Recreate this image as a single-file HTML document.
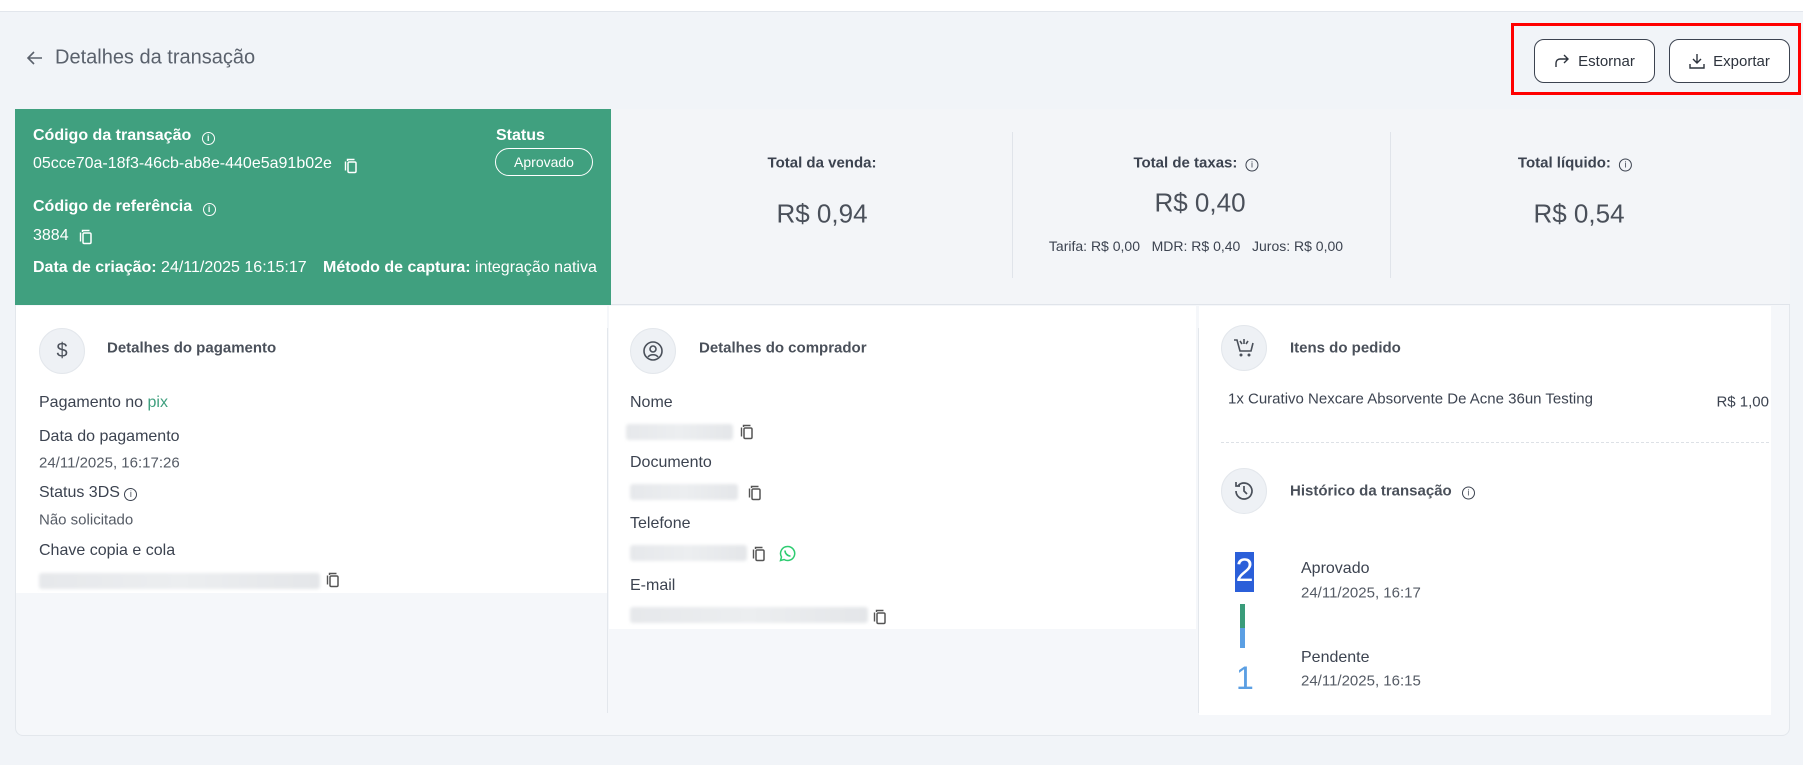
<!DOCTYPE html>
<html><head><meta charset="utf-8"><style>
*{margin:0;padding:0;box-sizing:border-box}
body{width:1803px;height:765px;background:#f1f4f8;font-family:"Liberation Sans",sans-serif;color:#3c4350;position:relative;overflow:hidden}
.a{position:absolute;white-space:nowrap}
.t{transform:translateY(-50%)}
.c{transform:translate(-50%,-50%)}
.w{color:#fff}
.b{font-weight:bold}
.blur{position:absolute;background:linear-gradient(90deg,#e6e8eb,#eceef0,#e4e6e9);filter:blur(1.5px);height:16px;border-radius:3px}
.ic{position:absolute;width:46px;height:46px;border-radius:50%;background:#eef1f5;border:1px solid #e3e7ec;display:flex;align-items:center;justify-content:center}
.btn{position:absolute;height:44px;border:1.5px solid #3c4350;border-radius:10px;background:#fff;display:flex;align-items:center;justify-content:center;gap:8px;font-size:15px;color:#2d333d}
.cp{position:absolute}
</style></head><body>
<svg width="0" height="0" style="position:absolute"><defs><symbol id="cp" viewBox="0 0 14 16"><path d="M3.5 3V1.5h7M1.5 3.5v9" stroke="currentColor" stroke-width="1.4" fill="none"/><rect x="4" y="4" width="8" height="10.5" rx="1.3" stroke="currentColor" stroke-width="1.5" fill="none"/></symbol></defs></svg>
<div class="a" style="left:0;top:0;width:1803px;height:12px;background:#fff;border-bottom:1px solid #e2e6ec"></div>
<svg class="a" style="left:26px;top:50px" width="18" height="16" viewBox="0 0 18 16"><path d="M16 8H2M8 2L2 8l6 6" stroke="#5a616c" stroke-width="1.6" fill="none"/></svg>
<div class="a t" style="left:55px;top:58px;font-size:20px;color:#5a616c">Detalhes da transação</div>

<div class="a" style="left:1511px;top:23px;width:290px;height:72px;border:3px solid #f00"></div>
<div class="btn" style="left:1534px;top:39px;width:121px"><svg width="16" height="14" viewBox="0 0 16 14"><path d="M2 13V9a4 4 0 0 1 4-4h8M10 1l4 4-4 4" stroke="#2d333d" stroke-width="1.4" fill="none"/></svg>Estornar</div>
<div class="btn" style="left:1669px;top:39px;width:121px"><svg width="16" height="16" viewBox="0 0 16 16"><path d="M8 1v9M4 6l4 4 4-4M1 11v4h14v-4" stroke="#2d333d" stroke-width="1.4" fill="none"/></svg>Exportar</div>

<div class="a" style="left:15px;top:109px;width:1775px;height:627px;background:#f5f7fa;border:1px solid #e3e7ec;border-radius:8px"></div>
<div class="a" style="left:611px;top:109px;width:1179px;height:196px;background:#f3f5f8;border-bottom:1px solid #e0e4ea"></div>
<div class="a" style="left:15px;top:109px;width:596px;height:196px;background:#40a07f"></div>
<div class="a t w b" style="left:33px;top:136px;font-size:16px">Código da transação <span style="display:inline-block;width:13px;height:13px;border:1.3px solid #fff;border-radius:50%;font-size:9px;text-align:center;line-height:11px;margin-left:6px;vertical-align:-1px">i</span></div>
<div class="a t w" style="left:33px;top:164px;font-size:16px">05cce70a-18f3-46cb-ab8e-440e5a91b02e</div>
<svg class="cp" style="left:344px;top:158px;color:#fff" width="14" height="16"><use href="#cp"/></svg>
<div class="a t w b" style="left:496px;top:136px;font-size:16px">Status</div>
<div class="a w" style="left:495px;top:148px;width:98px;height:28px;border:1.3px solid #fff;border-radius:14px;font-size:14px;text-align:center;line-height:26px">Aprovado</div>
<div class="a t w b" style="left:33px;top:207px;font-size:16px">Código de referência <span style="display:inline-block;width:13px;height:13px;border:1.3px solid #fff;border-radius:50%;font-size:9px;text-align:center;line-height:11px;margin-left:6px;vertical-align:-1px">i</span></div>
<div class="a t w" style="left:33px;top:236px;font-size:16px">3884</div>
<svg class="cp" style="left:79px;top:229px;color:#fff" width="14" height="16"><use href="#cp"/></svg>
<div class="a t w" style="left:33px;top:268px;font-size:16px"><b>Data de criação:</b> 24/11/2025 16:15:17</div>
<div class="a t w" style="left:323px;top:268px;font-size:16px"><b>Método de captura:</b> integração nativa</div>

<div class="a" style="left:1012px;top:132px;width:1px;height:146px;background:#e0e4ea"></div>
<div class="a" style="left:1390px;top:132px;width:1px;height:146px;background:#e0e4ea"></div>
<div class="a c b" style="left:822px;top:163px;font-size:15px">Total da venda:</div>
<div class="a c" style="left:822px;top:214px;font-size:26px;color:#4a505a">R$ 0,94</div>
<div class="a c b" style="left:1196px;top:163px;font-size:15px">Total de taxas: <span style="display:inline-block;width:13px;height:13px;border:1.3px solid #3c4350;border-radius:50%;font-size:9px;text-align:center;line-height:11px;margin-left:4px;font-weight:normal">i</span></div>
<div class="a c" style="left:1200px;top:203px;font-size:26px;color:#4a505a">R$ 0,40</div>
<div class="a c" style="left:1196px;top:246px;font-size:14px">Tarifa: R$ 0,00 &nbsp;&nbsp;MDR: R$ 0,40 &nbsp;&nbsp;Juros: R$ 0,00</div>
<div class="a c b" style="left:1575px;top:163px;font-size:15px">Total líquido: <span style="display:inline-block;width:13px;height:13px;border:1.3px solid #3c4350;border-radius:50%;font-size:9px;text-align:center;line-height:11px;margin-left:4px;font-weight:normal">i</span></div>
<div class="a c" style="left:1579px;top:214px;font-size:26px;color:#4a505a">R$ 0,54</div>

<div class="a" style="left:16px;top:306px;width:591px;height:287px;background:#fff"></div>
<div class="a" style="left:609px;top:306px;width:587px;height:323px;background:#fff"></div>
<div class="a" style="left:1199px;top:306px;width:572px;height:409px;background:#fff"></div>
<div class="a" style="left:607px;top:328px;width:1px;height:385px;background:#e3e7ec"></div>
<div class="a" style="left:1198px;top:328px;width:1px;height:385px;background:#e3e7ec"></div>

<div class="ic" style="left:39px;top:328px;font-size:20px;color:#4a505a">$</div>
<div class="a t b" style="left:107px;top:348px;font-size:15px;color:#4a505a">Detalhes do pagamento</div>
<div class="a t" style="left:39px;top:403px;font-size:16px">Pagamento no <span style="color:#40a07f">pix</span></div>
<div class="a t" style="left:39px;top:437px;font-size:16px">Data do pagamento</div>
<div class="a t" style="left:39px;top:463px;font-size:15px;color:#555b65">24/11/2025, 16:17:26</div>
<div class="a t" style="left:39px;top:493px;font-size:16px">Status 3DS <span style="display:inline-block;width:13px;height:13px;border:1.3px solid #3c4350;border-radius:50%;font-size:9px;text-align:center;line-height:11px">i</span></div>
<div class="a t" style="left:39px;top:520px;font-size:15px;color:#555b65">Não solicitado</div>
<div class="a t" style="left:39px;top:551px;font-size:16px">Chave copia e cola</div>
<div class="blur" style="left:39px;top:573px;width:281px"></div>
<svg class="cp" style="left:326px;top:572px;color:#555" width="14" height="16"><use href="#cp"/></svg>

<div class="ic" style="left:630px;top:328px"><svg width="22" height="22" viewBox="0 0 22 22"><circle cx="11" cy="11" r="9" stroke="#4a505a" stroke-width="1.6" fill="none"/><circle cx="11" cy="9" r="3" stroke="#4a505a" stroke-width="1.6" fill="none"/><path d="M6 17c2-3 8-3 10 0" stroke="#4a505a" stroke-width="1.6" fill="none"/></svg></div>
<div class="a t b" style="left:699px;top:348px;font-size:15px;color:#4a505a">Detalhes do comprador</div>
<div class="a t" style="left:630px;top:403px;font-size:16px">Nome</div>
<div class="blur" style="left:626px;top:424px;width:107px"></div><svg class="cp" style="left:740px;top:424px;color:#555" width="14" height="16"><use href="#cp"/></svg>
<div class="a t" style="left:630px;top:463px;font-size:16px">Documento</div>
<div class="blur" style="left:630px;top:484px;width:108px"></div><svg class="cp" style="left:748px;top:485px;color:#555" width="14" height="16"><use href="#cp"/></svg>
<div class="a t" style="left:630px;top:524px;font-size:16px">Telefone</div>
<div class="blur" style="left:630px;top:545px;width:117px"></div><svg class="cp" style="left:752px;top:546px;color:#555" width="14" height="16"><use href="#cp"/></svg>
<svg class="a" style="left:779px;top:545px" width="17" height="17" viewBox="0 0 17 17"><path d="M8.5 1.5a7 7 0 0 0-6 10.5l-1 3.5 3.6-1a7 7 0 1 0 3.4-13z" stroke="#2ecc71" stroke-width="1.5" fill="none"/><path d="M6 5.5c0 3 2.5 5.5 5.5 5.5" stroke="#2ecc71" stroke-width="1.6" fill="none"/></svg>
<div class="a t" style="left:630px;top:586px;font-size:16px">E-mail</div>
<div class="blur" style="left:630px;top:607px;width:238px"></div><svg class="cp" style="left:873px;top:609px;color:#555" width="14" height="16"><use href="#cp"/></svg>

<div class="ic" style="left:1221px;top:325px"><svg width="24" height="22" viewBox="0 0 24 22"><path d="M2 3h3l3 11h11l2-8M12 2v5M16 4l-2 3M8 4l2 3" stroke="#4a505a" stroke-width="1.6" fill="none"/><circle cx="9" cy="18" r="1.5" fill="#4a505a"/><circle cx="17" cy="18" r="1.5" fill="#4a505a"/></svg></div>
<div class="a t b" style="left:1290px;top:348px;font-size:15px;color:#4a505a">Itens do pedido</div>
<div class="a t" style="left:1228px;top:399px;font-size:15px">1x Curativo Nexcare Absorvente De Acne 36un Testing</div>
<div class="a t" style="right:34px;top:402px;font-size:15px">R$ 1,00</div>
<div class="a" style="left:1221px;top:442px;width:548px;border-top:1px dashed #dde1e6"></div>
<div class="ic" style="left:1221px;top:468px"><svg width="22" height="22" viewBox="0 0 22 22"><path d="M3 11a8 8 0 1 0 2.5-5.8M3 2v4h4M11 6v5l3 3" stroke="#4a505a" stroke-width="1.7" fill="none"/></svg></div>
<div class="a t b" style="left:1290px;top:491px;font-size:15px;color:#4a505a">Histórico da transação <span style="display:inline-block;width:13px;height:13px;border:1.3px solid #3c4350;border-radius:50%;font-size:9px;text-align:center;line-height:11px;margin-left:6px;font-weight:normal">i</span></div>
<div class="a" style="left:1235px;top:552px;width:19px;height:40px;background:#2b5fd9;color:#fff;font-size:32px;line-height:36px;text-align:center">2</div>
<div class="a" style="left:1240px;top:604px;width:5px;height:24px;background:#3a9c7a"></div>
<div class="a" style="left:1240px;top:628px;width:5px;height:20px;background:#5b9fe3"></div>
<div class="a" style="left:1236px;top:660px;font-size:32px;color:#5b9fe3;line-height:36px">1</div>
<div class="a t" style="left:1301px;top:569px;font-size:16px">Aprovado</div>
<div class="a t" style="left:1301px;top:593px;font-size:15px;color:#555b65">24/11/2025, 16:17</div>
<div class="a t" style="left:1301px;top:658px;font-size:16px">Pendente</div>
<div class="a t" style="left:1301px;top:681px;font-size:15px;color:#555b65">24/11/2025, 16:15</div>
</body></html>
